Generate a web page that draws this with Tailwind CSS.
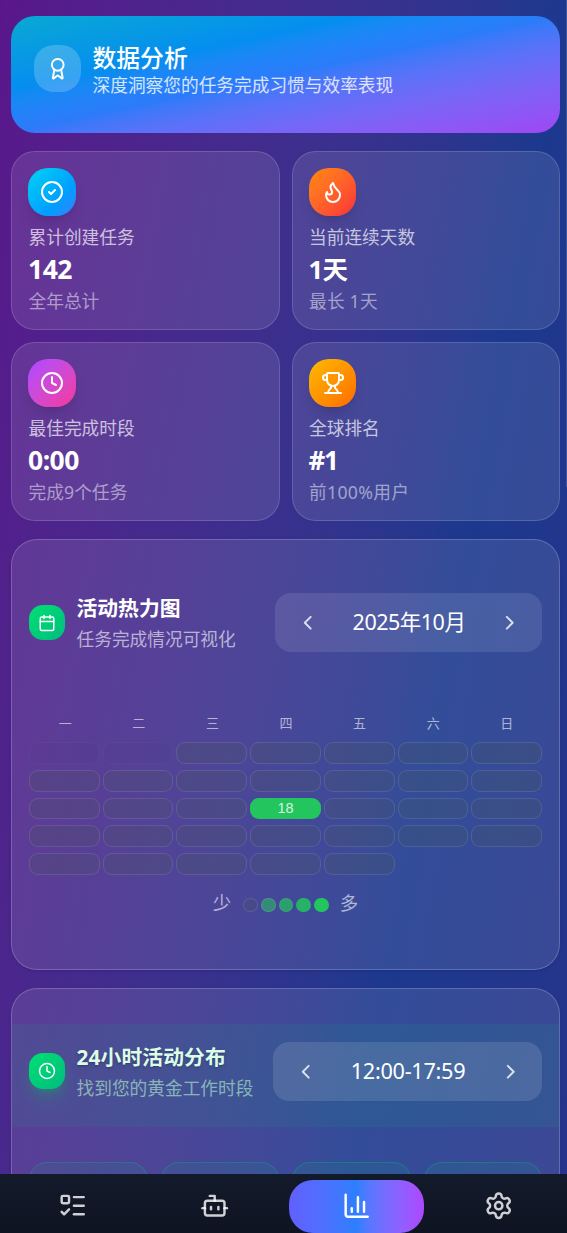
<!DOCTYPE html>
<html lang="zh-CN">
<head>
<meta charset="utf-8">
<meta name="viewport" content="width=device-width, initial-scale=1">
<title>数据分析</title>
<script src="https://cdn.jsdelivr.net/npm/@tailwindcss/browser@4"></script>
</head>
<body class="h-[1233px] overflow-hidden font-['Noto_Sans','Noto_Sans_CJK_SC',sans-serif] text-white">
<div class="relative flex h-[1233px] flex-col overflow-hidden bg-linear-to-br from-purple-900 via-blue-900 to-indigo-900 bg-size-[567px_3050px] bg-no-repeat">
  <main class="flex min-h-0 flex-1 flex-col overflow-hidden pt-4 pr-[7px] pl-[11px]">

    <header class="flex h-[117px] shrink-0 items-start gap-[11.5px] rounded-[24px] bg-linear-to-br from-cyan-500/90 via-blue-500/95 to-purple-500/90 pt-[29px] pl-[23px]">
      <div class="flex size-[47px] items-center justify-center rounded-[20px] bg-white/20">
        <svg class="size-[23.5px]" viewBox="0 0 24 24" fill="none" stroke="currentColor" stroke-width="2" stroke-linecap="round" stroke-linejoin="round"><path d="m15.477 12.89 1.515 8.526a.5.5 0 0 1-.81.47l-3.58-2.687a1 1 0 0 0-1.197 0l-3.586 2.686a.5.5 0 0 1-.81-.469l1.514-8.526"/><circle cx="12" cy="8" r="6"/></svg>
      </div>
      <div class="-mt-px">
        <h1 class="text-[23.8px] leading-7 font-medium">数据分析</h1>
        <p class="text-[17.7px] leading-[27px] text-white/80">深度洞察您的任务完成习惯与效率表现</p>
      </div>
    </header>

    <section class="mt-[18px] grid shrink-0 grid-cols-2 gap-3">
      <article class="h-[179px] rounded-[24px] border border-white/15 bg-white/10 p-4">
        <div class="flex size-[47.5px] items-center justify-center rounded-[20px] bg-linear-to-br from-cyan-400 to-blue-500 shadow-lg">
          <svg class="size-6" viewBox="0 0 24 24" fill="none" stroke="currentColor" stroke-width="2" stroke-linecap="round" stroke-linejoin="round"><circle cx="12" cy="12" r="10"/><path d="m9 12 2 2 4-4"/></svg>
        </div>
        <p class="mt-[9px] pl-[0.5px] text-[17.7px] leading-6 text-white/70">累计创建任务</p>
        <p class="mt-[2px] text-[26.5px] leading-9 font-bold tracking-[-0.5px]">142</p>
        <p class="mt-[2px] pl-[0.5px] text-[17.7px] leading-6 text-white/50">全年总计</p>
      </article>
      <article class="h-[179px] rounded-[24px] border border-white/15 bg-white/10 p-4">
        <div class="flex size-[47.5px] items-center justify-center rounded-[20px] bg-linear-to-br from-orange-400 to-red-500 shadow-lg">
          <svg class="ml-px size-6" viewBox="0 0 24 24" fill="none" stroke="currentColor" stroke-width="2" stroke-linecap="round" stroke-linejoin="round"><path d="M12 3q1 4 4 6.5t3 5.5a1 1 0 0 1-14 0 5 5 0 0 1 1-3 1 1 0 0 0 5 0c0-2-1.5-3-1.5-5q0-2 2.5-4"/></svg>
        </div>
        <p class="mt-[9px] pl-[0.5px] text-[17.7px] leading-6 text-white/70">当前连续天数</p>
        <p class="mt-[2px] text-[25.5px] leading-9 font-bold tracking-[-0.6px]">1天</p>
        <p class="mt-[2px] pl-[0.5px] text-[17.7px] leading-6 tracking-[0.2px] text-white/50">最长 1天</p>
      </article>
      <article class="h-[179px] rounded-[24px] border border-white/15 bg-white/10 p-4">
        <div class="flex size-[47.5px] items-center justify-center rounded-[20px] bg-linear-to-br from-purple-500 to-pink-500 shadow-lg">
          <svg class="size-6" viewBox="0 0 24 24" fill="none" stroke="currentColor" stroke-width="2" stroke-linecap="round" stroke-linejoin="round"><circle cx="12" cy="12" r="10"/><path d="M12 6v6l4 2"/></svg>
        </div>
        <p class="mt-[9px] pl-[0.5px] text-[17.7px] leading-6 text-white/70">最佳完成时段</p>
        <p class="mt-[2px] text-[26.5px] leading-9 font-bold tracking-[-0.5px]">0:00</p>
        <p class="mt-[2px] pl-[0.5px] text-[17.7px] leading-6 tracking-[0.1px] text-white/50">完成9个任务</p>
      </article>
      <article class="h-[179px] rounded-[24px] border border-white/15 bg-white/10 p-4">
        <div class="flex size-[47.5px] items-center justify-center rounded-[20px] bg-linear-to-br from-amber-400 to-orange-500 shadow-lg">
          <svg class="ml-px size-6" viewBox="0 0 24 24" fill="none" stroke="currentColor" stroke-width="2" stroke-linecap="round" stroke-linejoin="round"><path d="M10 14.66v1.626a2 2 0 0 1-.976 1.696A5 5 0 0 0 7 21.978"/><path d="M14 14.66v1.626a2 2 0 0 0 .976 1.696A5 5 0 0 1 17 21.978"/><path d="M18 9h1.5a1 1 0 0 0 0-5H18"/><path d="M4 22h16"/><path d="M6 9a6 6 0 0 0 12 0V3a1 1 0 0 0-1-1H7a1 1 0 0 0-1 1z"/><path d="M6 9H4.5a1 1 0 0 1 0-5H6"/></svg>
        </div>
        <p class="mt-[9px] pl-[0.5px] text-[17.7px] leading-6 text-white/70">全球排名</p>
        <p class="mt-[2px] text-[26px] leading-9 font-bold tracking-[-1.2px]">#1</p>
        <p class="mt-[2px] pl-[0.5px] text-[17.7px] leading-6 tracking-[0.3px] text-white/50">前100%用户</p>
      </article>
    </section>

    <section class="mt-[18px] h-[431px] shrink-0 rounded-[26px] border border-white/20 bg-white/10 px-[17px] pt-[53px] shadow-sm">
      <div class="flex h-[59px] items-center">
        <div class="flex size-[35.5px] items-center justify-center rounded-[14px] bg-linear-to-br from-green-400 to-emerald-500">
          <svg class="size-[18px]" viewBox="0 0 24 24" fill="none" stroke="currentColor" stroke-width="2" stroke-linecap="round" stroke-linejoin="round"><path d="M8 2v4"/><path d="M16 2v4"/><rect width="18" height="18" x="3" y="4" rx="2"/><path d="M3 10h18"/></svg>
        </div>
        <div class="ml-[12px]">
          <h2 class="text-[20.8px] leading-8 font-bold">活动热力图</h2>
          <p class="text-[17.7px] leading-[30px] text-white/60">任务完成情况可视化</p>
        </div>
        <div class="ml-auto flex h-[59px] w-[267px] items-center justify-between rounded-[16px] bg-white/10 pr-[20px] pl-[21px]">
          <svg class="size-[23.5px] text-white/80" viewBox="0 0 24 24" fill="none" stroke="currentColor" stroke-width="2" stroke-linecap="round" stroke-linejoin="round"><path d="m15 18-6-6 6-6"/></svg>
          <span class="text-[21.5px] tracking-[-0.5px]">2025年10月</span>
          <svg class="size-[23.5px] text-white/80" viewBox="0 0 24 24" fill="none" stroke="currentColor" stroke-width="2" stroke-linecap="round" stroke-linejoin="round"><path d="m9 18 6-6-6-6"/></svg>
        </div>
      </div>

      <div class="mt-[62px] grid grid-cols-7 gap-x-[3px] pl-px text-center text-[13px] leading-[18px] text-white/60">
        <span>一</span><span>二</span><span>三</span><span>四</span><span>五</span><span>六</span><span>日</span>
      </div>
      <div id="days" class="mt-[10px] grid grid-cols-7 gap-x-[3px] gap-y-[6px]"></div>

      <div class="mt-[16px] flex h-7 items-center justify-center gap-3 text-[18.5px] text-white/60">
        <span class="-mt-[4px]">少</span>
        <span class="flex gap-[3px]">
          <i class="size-[14.7px] rounded-full border border-white/10 bg-[#4b5a50]/20"></i>
          <i class="size-[14.7px] rounded-full border border-white/10 bg-[#22c55e]/55"></i>
          <i class="size-[14.7px] rounded-full border border-white/5 bg-[#22c55e]/70"></i>
          <i class="size-[14.7px] rounded-full bg-[#22c55e]/85"></i>
          <i class="size-[14.7px] rounded-full bg-[#22c55e]"></i>
        </span>
        <span class="-mt-[4px] -ml-px">多</span>
      </div>
    </section>

    <section class="mt-[18px] h-[431px] shrink-0 rounded-[26px] border border-white/20 bg-white/10 pt-[35px] shadow-sm">
      <div class="flex h-[103px] items-start bg-emerald-500/10 px-[17px] pt-[18px]">
        <div class="mt-[11px] flex size-[35.5px] items-center justify-center rounded-[14px] bg-linear-to-br from-green-400 to-emerald-500 shadow-lg shadow-green-500/30">
          <svg class="size-[18px]" viewBox="0 0 24 24" fill="none" stroke="currentColor" stroke-width="2" stroke-linecap="round" stroke-linejoin="round"><circle cx="12" cy="12" r="10"/><path d="M12 6v6l4 2"/></svg>
        </div>
        <div class="-mt-px ml-[12px]">
          <h2 class="text-[20.8px] leading-8 font-bold tracking-[0.1px] text-green-100 text-shadow-md">24小时活动分布</h2>
          <p class="text-[17.7px] leading-[30px] text-green-200/60">找到您的黄金工作时段</p>
        </div>
        <div class="ml-auto flex h-[59px] w-[269px] items-center justify-between rounded-[16px] bg-white/12 pr-[20px] pl-[21px]">
          <svg class="size-[23.5px] text-white/80" viewBox="0 0 24 24" fill="none" stroke="currentColor" stroke-width="2" stroke-linecap="round" stroke-linejoin="round"><path d="m15 18-6-6 6-6"/></svg>
          <span class="text-[21.7px] tracking-[-0.3px]">12:00-17:59</span>
          <svg class="size-[23.5px] text-white/80" viewBox="0 0 24 24" fill="none" stroke="currentColor" stroke-width="2" stroke-linecap="round" stroke-linejoin="round"><path d="m9 18 6-6-6-6"/></svg>
        </div>
      </div>
      <div class="mt-[35px] grid grid-cols-4 gap-[13px] px-[17px]">
        <div class="h-20 rounded-[18px] border border-emerald-500/30 bg-emerald-500/10"></div>
        <div class="h-20 rounded-[18px] border border-emerald-500/30 bg-emerald-500/10"></div>
        <div class="h-20 rounded-[18px] border border-emerald-500/30 bg-emerald-500/10"></div>
        <div class="h-20 rounded-[18px] border border-emerald-500/30 bg-emerald-500/10"></div>
      </div>
    </section>
  </main>

  <nav class="grid h-[59px] shrink-0 grid-cols-[repeat(4,142px)] items-center bg-linear-to-b from-[#131a2b] to-[#0f1422] pt-[5px] pl-[1.5px] text-white/80">
    <a class="flex justify-center"><svg class="size-[29.4px]" viewBox="0 0 24 24" fill="none" stroke="currentColor" stroke-width="2" stroke-linecap="round" stroke-linejoin="round"><path d="M13 5h8"/><path d="M13 12h8"/><path d="M13 19h8"/><path d="m3 17 2 2 4-4"/><rect x="3" y="4" width="6" height="6" rx="1"/></svg></a>
    <a class="flex justify-center"><svg class="size-[29.4px]" viewBox="0 0 24 24" fill="none" stroke="currentColor" stroke-width="2" stroke-linecap="round" stroke-linejoin="round"><path d="M12 8V4H8"/><rect width="16" height="12" x="4" y="8" rx="2"/><path d="M2 14h2"/><path d="M20 14h2"/><path d="M15 13v2"/><path d="M9 13v2"/></svg></a>
    <a class="mx-auto flex h-[53px] w-[135px] items-center justify-center rounded-[24px] bg-linear-to-r from-indigo-500 via-blue-500 to-purple-500 text-white"><svg class="size-[29.4px]" viewBox="0 0 24 24" fill="none" stroke="currentColor" stroke-width="2" stroke-linecap="round" stroke-linejoin="round"><path d="M3 3v16a2 2 0 0 0 2 2h16"/><path d="M18 17V9"/><path d="M13 17V5"/><path d="M8 17v-3"/></svg></a>
    <a class="flex justify-center"><svg class="size-[29.4px]" viewBox="0 0 24 24" fill="none" stroke="currentColor" stroke-width="2" stroke-linecap="round" stroke-linejoin="round"><path d="M9.671 4.136a2.34 2.34 0 0 1 4.659 0 2.34 2.34 0 0 0 3.319 1.915 2.34 2.34 0 0 1 2.33 4.033 2.34 2.34 0 0 0 0 3.831 2.34 2.34 0 0 1-2.33 4.033 2.34 2.34 0 0 0-3.319 1.915 2.34 2.34 0 0 1-4.659 0 2.34 2.34 0 0 0-3.32-1.915 2.34 2.34 0 0 1-2.33-4.033 2.34 2.34 0 0 0 0-3.831A2.34 2.34 0 0 1 6.35 6.051a2.34 2.34 0 0 0 3.319-1.915"/><circle cx="12" cy="12" r="3"/></svg></a>
  </nav>
  <div class="absolute top-0 right-0 h-[487px] w-px bg-white/15"></div>
</div>
<script>
  // October 2025 starts on a Wednesday; the two leading cells are placeholders.
  const grid = document.getElementById('days');
  for (let i = 0; i < 33; i++) {
    const cell = document.createElement('div');
    if (i < 2) cell.className = 'h-[21.8px] rounded-[9px] border border-white/3 bg-gray-700/5';
    else if (i === 17) {
      cell.className = "h-[21.8px] rounded-[9px] bg-[#22c55e] text-center font-['Liberation_Sans',sans-serif] text-[14.5px] leading-[21px] text-white/80";
      cell.textContent = '18';
    } else cell.className = 'h-[21.8px] rounded-[9px] border border-white/10 bg-[#4b5a50]/22';
    grid.appendChild(cell);
  }
</script>
</body>
</html>
